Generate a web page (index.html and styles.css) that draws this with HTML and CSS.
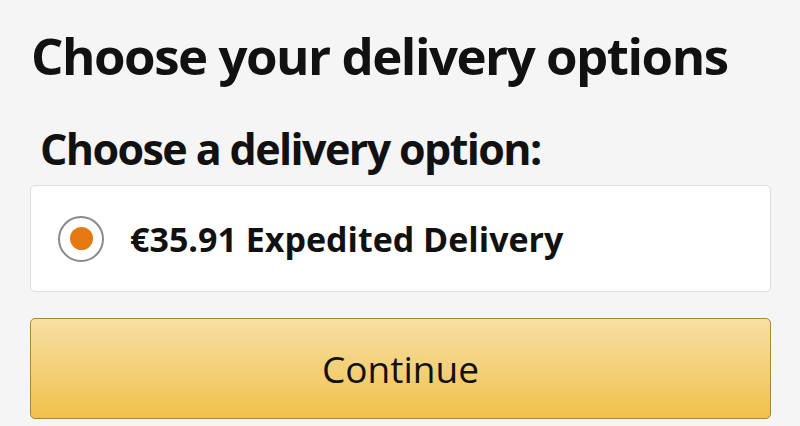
FILE: index.html
```html
<!DOCTYPE html>
<html lang="en">
<head>
<meta charset="utf-8">
<title>Choose your delivery options</title>
<link rel="stylesheet" href="styles.css">
</head>
<body>
<main class="page">
  <h1 class="title">Choose your delivery options</h1>
  <h2 class="subtitle">Choose a delivery option:</h2>
  <label class="option">
    <span class="radio"><span class="radio-dot"></span></span>
    <span class="option-text">€35.91 Expedited Delivery</span>
  </label>
  <button class="continue" type="button">Continue</button>
</main>
</body>
</html>
```

FILE: styles.css
```css
html, body {
  margin: 0;
  padding: 0;
  background: #f5f5f5;
}
body {
  font-family: "Open Sans", "Noto Sans", sans-serif;
  color: #111;
}
.page {
  display: flex;
  flex-direction: column;
  padding: 0 29px 0 30px;
}
.title {
  margin: 20px 0 0 1px;
  font-size: 51px;
  line-height: 70px;
  font-weight: 700;
  letter-spacing: -1.5px;
}
.subtitle {
  margin: 34px 0 0 10px;
  font-size: 43px;
  line-height: 50px;
  font-weight: 700;
  letter-spacing: -1.6px;
}
.option {
  margin-top: 11px;
  height: 105px;
  display: flex;
  align-items: center;
  gap: 26px;
  padding-left: 27px;
  background: #fff;
  border: 1px solid #dddddd;
  border-radius: 5px;
}
.radio {
  width: 42px;
  height: 42px;
  border: 2px solid #8a8a8a;
  border-radius: 50%;
  display: flex;
  align-items: center;
  justify-content: center;
  background: #fff;
}
.radio-dot {
  width: 23px;
  height: 23px;
  border-radius: 50%;
  background: #e47911;
}
.option-text {
  font-size: 34px;
  font-weight: 700;
  letter-spacing: 0;
}
.continue {
  margin-top: 26px;
  height: 101px;
  border: 1px solid #a88734;
  border-radius: 5px;
  background: linear-gradient(to bottom, #f7dfa5, #f0c14b);
  font-family: "Open Sans", "Noto Sans", sans-serif;
  font-size: 37px;
  font-weight: 400;
  color: #111;
  padding: 0;
}
```
